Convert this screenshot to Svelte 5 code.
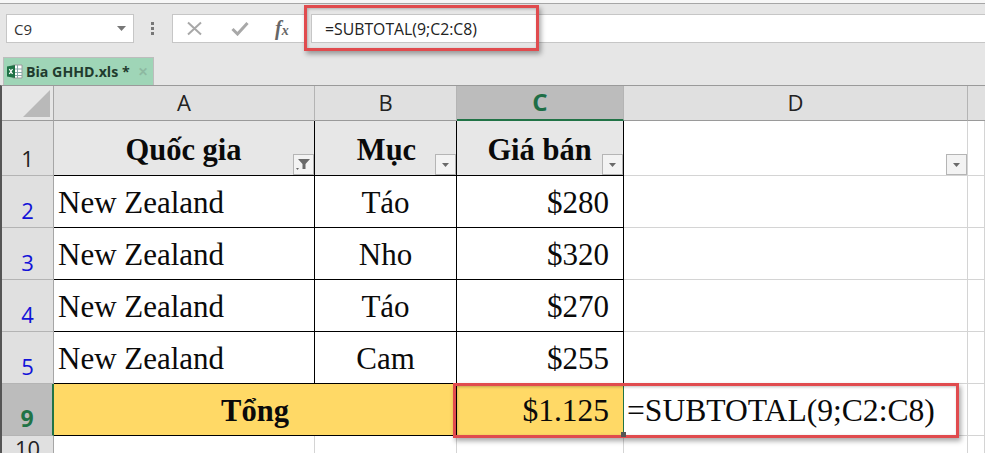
<script>
  const rows = [
    { n: 2, a: 'New Zealand', b: 'Táo', c: '$280' },
    { n: 3, a: 'New Zealand', b: 'Nho', c: '$320' },
    { n: 4, a: 'New Zealand', b: 'Táo', c: '$270' },
    { n: 5, a: 'New Zealand', b: 'Cam', c: '$255' }
  ];
</script>

<div class="app">
  <div class="topstrip"></div>
  <div class="formula-row">
    <div class="namebox">
      <span>C9</span>
      <svg width="9" height="5" viewBox="0 0 9 5"><path d="M0 0h9L4.500 5z" fill="#777" /></svg>
    </div>
    <svg class="dots" width="3" height="13" viewBox="0 0 3 13"><path d="M0 0h3v3H0zM0 5h3v3H0zM0 10h3v3H0z" fill="#777" /></svg>
    <div class="fxbox">
      <svg width="17" height="15" viewBox="0 0 17 15"><path d="M2 1.500 15 13.500M15 1.500 2 13.500" stroke="#a8a8a8" stroke-width="2" fill="none" /></svg>
      <svg width="18" height="15" viewBox="0 0 18 15"><path d="M1.500 8 6.500 13 16.500 2" stroke="#a8a8a8" stroke-width="3" fill="none" /></svg>
      <span class="fx">f<i>x</i></span>
    </div>
    <div class="input">=SUBTOTAL(9;C2:C8)</div>
  </div>

  <div class="tabs">
    <div class="tab">
      <svg width="17" height="17" viewBox="0 0 17 17">
        <path d="M7 2h9v13H7z" fill="#fff" stroke="#9a9a9a" />
        <path d="M7 6h9M7 9.500h9M7 12.500h9M11.500 2v13" stroke="#8aa" stroke-width="1" fill="none" />
        <path d="M1 3.500 9 2v13l-8-1.500z" fill="#1e7145" />
        <path d="M3.300 6 6.500 11M6.500 6 3.300 11" stroke="#fff" stroke-width="1.300" fill="none" />
      </svg>
      <span class="tabname">Bia GHHD.xls *</span>
      <span class="tabclose">✕</span>
    </div>
  </div>

  <div class="sheet">
    <div class="corner">
      <svg width="27" height="27" viewBox="0 0 27 27"><path d="M27 0v27H0z" fill="#b9b9b9" /></svg>
    </div>
    <div class="colh">A</div>
    <div class="colh">B</div>
    <div class="colh sel">C</div>
    <div class="colh">D</div>
    <div class="colh last"></div>

    <div class="rowh r1">1</div>
    <div class="cell head bx"><span>Quốc gia</span>
      <span class="fbtn">
        <svg width="15" height="13" viewBox="0 0 15 13"><path d="M2 1h12L9.500 6V11H6.500V6z" fill="#6a6a6a" /><path d="M0 10h3L1.500 12z" fill="#6a6a6a" /></svg>
      </span>
    </div>
    <div class="cell head bx"><span class="muc">Mục</span>
      <span class="fbtn"><svg width="7" height="4" viewBox="0 0 7 4"><path d="M0 0h7L3.500 4z" fill="#6a6a6a" /></svg></span>
    </div>
    <div class="cell head bx"><span>Giá bán</span>
      <span class="fbtn"><svg width="7" height="4" viewBox="0 0 7 4"><path d="M0 0h7L3.500 4z" fill="#6a6a6a" /></svg></span>
    </div>
    <div class="cell plain">
      <span class="fbtn"><svg width="7" height="4" viewBox="0 0 7 4"><path d="M0 0h7L3.500 4z" fill="#6a6a6a" /></svg></span>
    </div>
    <div class="cell plain"></div>

    {#each rows as r}
      <div class="rowh blue">{r.n}</div>
      <div class="cell bx left">{r.a}</div>
      <div class="cell bx center">{r.b}</div>
      <div class="cell bx right">{r.c}</div>
      <div class="cell plain"></div>
      <div class="cell plain"></div>
    {/each}

    <div class="rowh selrow">9</div>
    <div class="cell total span2 bx">Tổng</div>
    <div class="cell amount bx right">$1.125<span class="handle"></span></div>
    <div class="cell plain formula">=SUBTOTAL(9;C2:C8)</div>
    <div class="cell plain"></div>

    <div class="rowh">10</div>
    <div class="cell plain"></div>
    <div class="cell plain"></div>
    <div class="cell plain"></div>
    <div class="cell plain"></div>
    <div class="cell plain"></div>
  </div>

  <div class="mark m1"></div>
  <div class="mark m2"></div>
</div>

<style>
  :global(body) { margin: 0; background: #fff; }
  .app {
    position: relative;
    width: 985px;
    height: 453px;
    overflow: hidden;
    background: #e6e6e6;
    font-family: "Open Sans", sans-serif;
    color: #222;
  }
  .topstrip { height: 3px; background: #f7f7f7; border-bottom: 1px solid #a6a6a6; }
  .formula-row {
    height: 29px;
    margin-top: 10px;
    display: flex;
    align-items: stretch;
    padding-left: 6px;
  }
  .namebox, .fxbox, .input {
    background: #fff;
    border: 1px solid #c6c6c6;
    box-sizing: border-box;
    display: flex;
    align-items: center;
  }
  .namebox {
    width: 128px;
    justify-content: space-between;
    padding: 0 7px;
    font-size: 15px;
    color: #333;
  }
  .dots { align-self: center; margin: 0 18px 0 17px; }
  .fxbox {
    width: 133px;
    margin-right: 6px;
    padding-left: 13px;
    gap: 28px;
  }
  .fx { font-family: "Liberation Serif", serif; font-weight: bold; font-style: italic; font-size: 20px; color: #666; margin-left: -2px; }
  .fx i { font-size: 14px; }
  .input {
    flex: 1;
    border-right: 0;
    padding-left: 13px;
    font-size: 15.800px;
    color: #222;
  }
  .tabs { height: 42px; padding: 14px 0 0 3px; box-sizing: border-box; }
  .tab {
    width: 151px;
    height: 28px;
    background: #9fd5b7;
    border: 1px solid #bdbdbd;
    border-bottom: 0;
    box-sizing: border-box;
    display: flex;
    align-items: center;
    padding-left: 2px;
    gap: 3px;
    font-weight: bold;
    font-size: 14.200px;
    color: #1f3b2e;
  }
  .tabname { white-space: nowrap; }
  .tabclose { color: #8db9a1; font-size: 12px; margin-left: 5px; }
  .sheet {
    display: grid;
    grid-template-columns: 52px 261px 142px 167px 344px 17px;
    grid-template-rows: 35px 55px repeat(4, 52px) 52px 30px;
    background: #fff;
    border-top: 1px solid #9a9a9a;
    border-left: 2px solid #555;
    box-sizing: border-box;
    width: 985px;
  }
  .corner {
    background: #e6e6e6;
    border-right: 1px solid #a6a6a6;
    border-bottom: 1px solid #9a9a9a;
    box-sizing: border-box;
    display: flex;
    justify-content: flex-end;
    align-items: flex-end;
    padding: 0 3px 3px 0;
  }
  .colh {
    background: #e0e0e0;
    border-right: 1px solid #b4b4b4;
    border-bottom: 1px solid #9a9a9a;
    box-sizing: border-box;
    display: flex;
    align-items: center;
    justify-content: center;
    font-size: 22px;
    color: #222;
    padding-bottom: 3px;
  }
  .colh.sel {
    background: #bcbcbc;
    color: #1e6e46;
    font-weight: bold;
    font-size: 24px;
    border-bottom: 2px solid #217346;
  }
  .colh.last { border-right: 0; }
  .rowh {
    background: #e0e0e0;
    border-right: 1px solid #a6a6a6;
    border-bottom: 1px solid #b4b4b4;
    box-sizing: border-box;
    display: flex;
    align-items: flex-end;
    justify-content: center;
    font-size: 22px;
    line-height: 30px;
    color: #222;
    padding-bottom: 2px;
  }
  .rowh.blue { color: #1212d8; }
  .rowh.selrow {
    background: #bcbcbc;
    color: #217346;
    font-weight: bold;
    font-size: 23px;
    border-right: 2px solid #217346;
  }
  .cell {
    position: relative;
    box-sizing: border-box;
    font-family: "Liberation Serif", serif;
    font-size: 31px;
    color: #0a0a0a;
    display: flex;
    align-items: center;
    white-space: nowrap;
    padding-top: 3px;
    border-right: 1px solid #d4d4d4;
    border-bottom: 1px solid #d4d4d4;
  }
  .bx { border-right: 1px solid #000; border-bottom: 1px solid #000; }
  .head {
    background: #e7e7e7;
    font-weight: bold;
    font-size: 30.500px;
    justify-content: center;
    padding-top: 0;
  }
  .head span:first-child { margin-right: 1px; margin-top: 4px; }
  .head .muc { margin-left: 3px; }
  .left { padding-left: 4px; }
  .center { justify-content: center; }
  .right { justify-content: flex-end; padding-right: 14px; }
  .total {
    grid-column: span 2;
    background: #ffd966;
    font-weight: bold;
    font-size: 30.500px;
    justify-content: center;
  }
  .amount { background: #ffd966; border-right: 1px solid #217346; font-size: 31.500px; }
  .formula { overflow: visible; padding-left: 3px; font-size: 31.600px; }
  .handle {
    position: absolute;
    right: -3px;
    bottom: -2px;
    width: 5px;
    height: 5px;
    box-sizing: border-box;
    background: #555;
    z-index: 1;
  }
  .fbtn {
    position: absolute;
    right: 0;
    bottom: 0;
    width: 21px;
    height: 21px;
    box-sizing: border-box;
    background: #f3f3f3;
    border: 1px solid #b5b5b5;
    display: flex;
    align-items: center;
    justify-content: center;
  }
  .mark {
    position: absolute;
    border: 3px solid #e04b4e;
    box-sizing: border-box;
    box-shadow: 2px 3px 5px rgba(0, 0, 0, 0.35), inset 1px 1px 3px rgba(0, 0, 0, 0.25);
    pointer-events: none;
  }
  .m1 { left: 304px; top: 5px; width: 235px; height: 46px; }
  .m2 { left: 453px; top: 383px; width: 506px; height: 55px; }
</style>
